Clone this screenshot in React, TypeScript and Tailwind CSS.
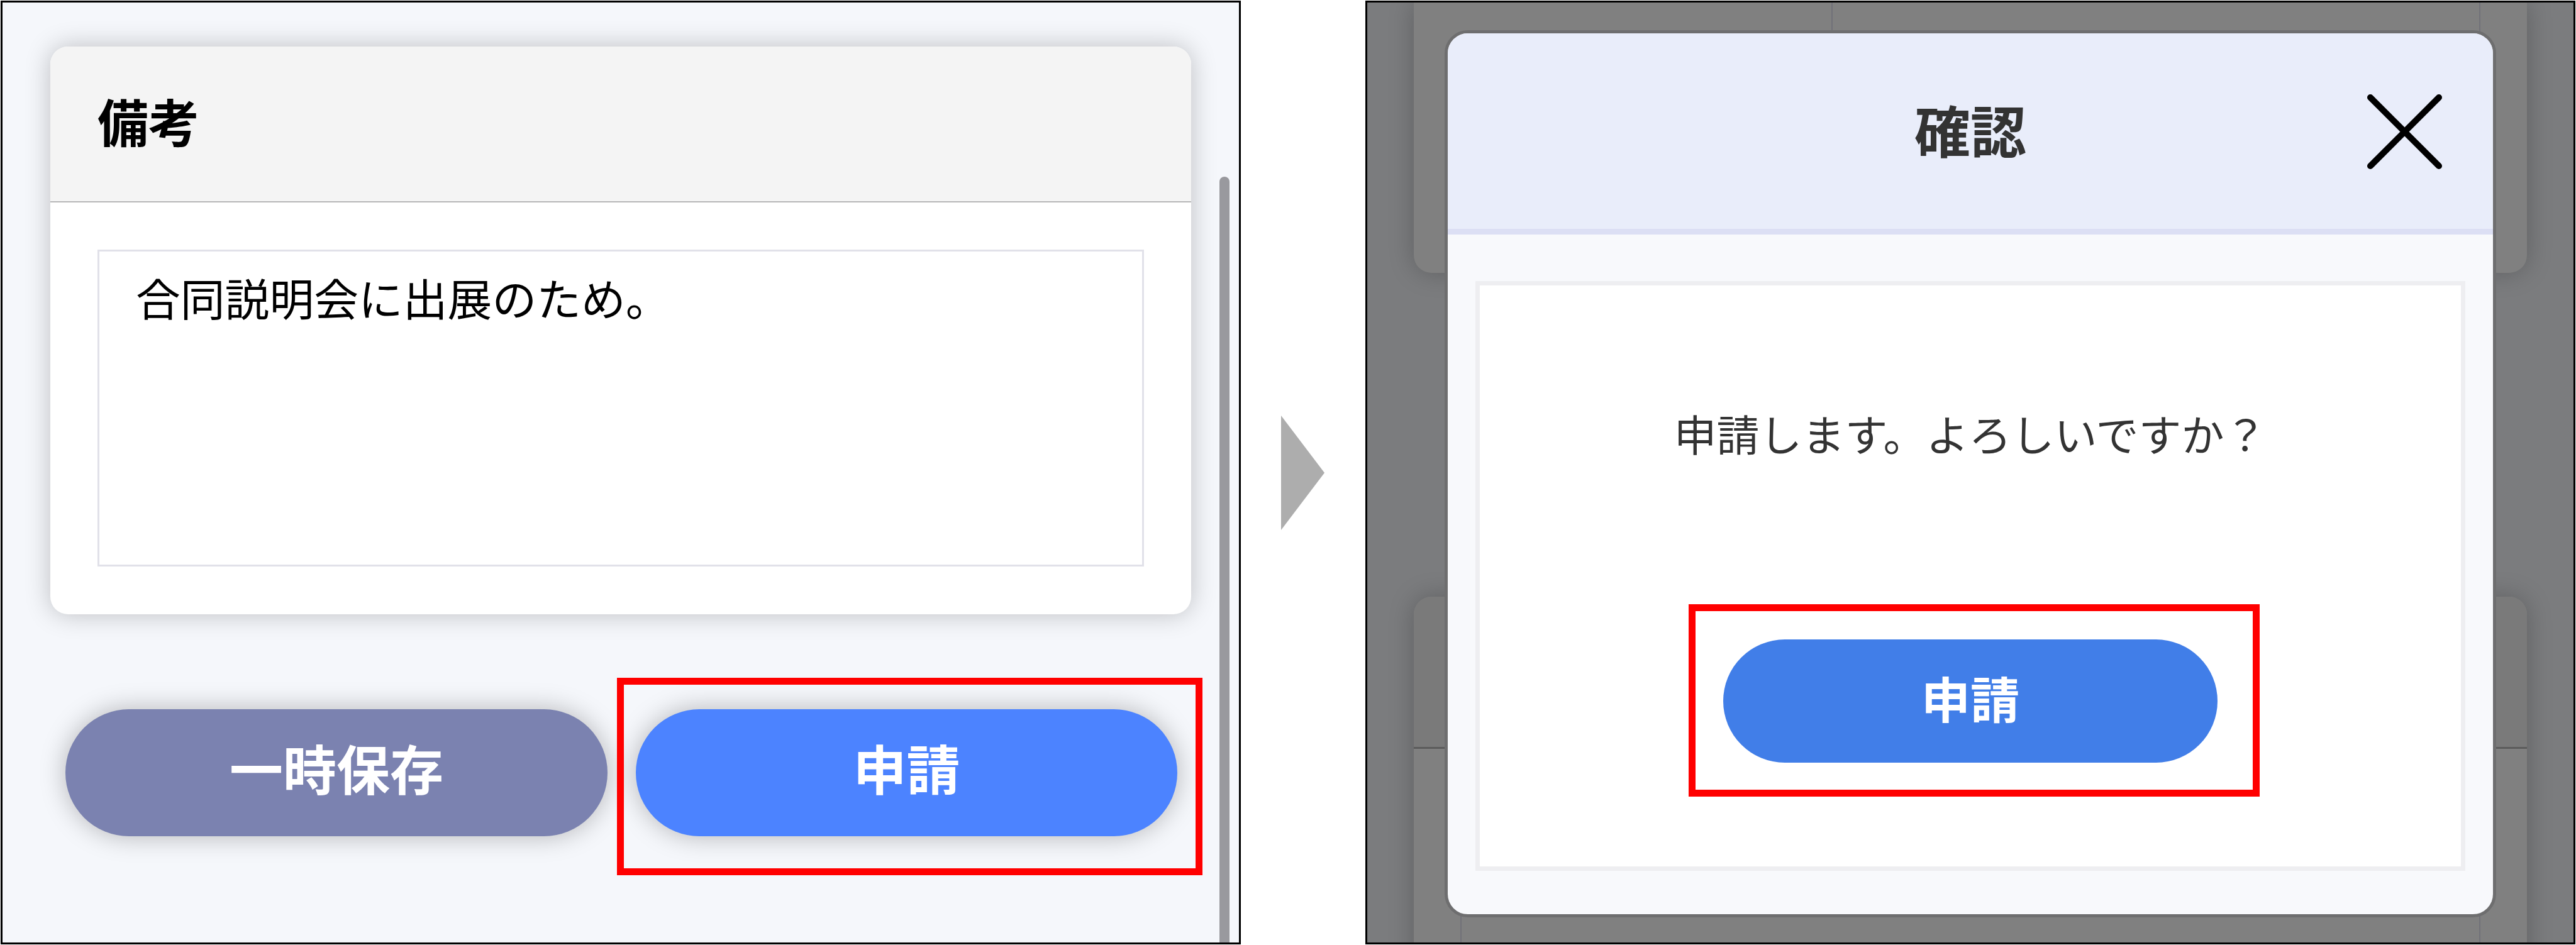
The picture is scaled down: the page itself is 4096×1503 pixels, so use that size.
function Highlight({ className }: { className: string }) {
  return <div className={`pointer-events-none absolute border-[11px] border-[#ff0000] ${className}`} />
}

function RemarksScreen() {
  return (
    <section className="relative h-[1501px] w-[1972px] shrink-0 overflow-hidden border-[3px] border-black bg-[#f5f7fb] pt-[70px]">
      {/* Remarks card */}
      <div className="ml-[76px] w-[1814px] overflow-hidden rounded-[28px] bg-white shadow-[0_0_40px_rgba(0,0,0,0.23)]">
        <h2 className="h-[248px] border-b-2 border-[#b6b6b7] bg-[#f4f4f4] pl-[75px] text-[81px] font-bold leading-[248px] text-black">
          備考
        </h2>
        <div className="px-[75px] pt-[75px] pb-[76px]">
          <div className="h-[504px] border-[3px] border-[#e1e1e9] bg-white px-[58px] pt-[29px]">
            <p className="text-[70.8px] leading-[100px] text-black">合同説明会に出展のため。</p>
          </div>
        </div>
      </div>

      {/* Actions */}
      <div className="mt-[151px] ml-[100px] flex gap-[45px]">
        <button className="h-[202px] w-[862px] rounded-full bg-[#7b82b0] pb-[3px] text-[85px] font-bold leading-none text-white shadow-[0_0_40px_rgba(0,0,0,0.27)]">
          一時保存
        </button>
        <div className="relative">
          <button className="h-[202px] w-[861px] rounded-full bg-[#4c83ff] pb-[3px] text-[85px] font-bold leading-none text-white shadow-[0_0_40px_rgba(0,0,0,0.27)]">
            申請
          </button>
          <Highlight className="-top-[50px] -left-[30px] h-[314px] w-[931px]" />
        </div>
      </div>

      {/* Scrollbar thumb */}
      <div className="absolute top-[277px] right-[15px] bottom-0 w-[16px] rounded-t-full bg-[#99999e]" />
    </section>
  )
}

function ConfirmScreen() {
  return (
    <section className="relative h-[1501px] w-[1924px] shrink-0 overflow-hidden border-[3px] border-black bg-[#7b7c7e]">
      {/* Dimmed form behind the dialog */}
      <div className="flex flex-col pl-[74px]">
        <div className="h-[430px] w-[1770px] rounded-b-[28px] bg-[#808080] pr-[74px] pl-[664px] shadow-[0_0_40px_rgba(0,0,0,0.23)]">
          <div className="h-[354px] border-x-2 border-[#717178]" />
        </div>
        <div className="mt-[515px] h-[640px] w-[1770px] overflow-hidden rounded-t-[28px] bg-[#808080] shadow-[0_0_40px_rgba(0,0,0,0.23)]">
          <div className="h-[242px] border-b-[3px] border-[#5b5b5b] bg-[#7a7a7a]" />
          <div className="px-[74px] pt-[76px]">
            <div className="h-[504px] border-2 border-[#717178]" />
          </div>
        </div>
      </div>

      {/* Confirm dialog */}
      <div className="absolute top-[44px] left-[123px] w-[1672px] overflow-hidden rounded-[37px] border-[5px] border-[#6e6e6f] bg-[#f8f9fc]">
        <header className="relative h-[320px] border-b-[9px] border-[#dcdff4] bg-[#e9edfa]">
          <h2 className="text-center text-[89px] font-bold leading-[319px] text-[#333333]">確認</h2>
          <button className="absolute top-[96px] right-[80px]" aria-label="閉じる">
            <svg className="block size-[121px]" viewBox="0 0 121 121" fill="none" stroke="#000" strokeWidth="10" strokeLinecap="round">
              <path d="M6 6 115 115M115 6 6 115" />
            </svg>
          </button>
        </header>
        <div className="px-[44px] pt-[74px] pb-[69px]">
          <div className="flex h-[938px] flex-col items-center border-[7px] border-[#eeeef1] bg-white">
            <p className="mt-[190px] text-[68px] leading-[100px] text-[#333333]">申請します。よろしいですか？</p>
            <div className="relative mt-[273px]">
              <button className="block h-[196px] w-[786px] rounded-full bg-[#417ee8] pt-[3px] text-[78.3px] font-bold leading-none text-white">
                申請
              </button>
              <Highlight className="-top-[56px] -left-[55px] h-[306px] w-[908px]" />
            </div>
          </div>
        </div>
      </div>
    </section>
  )
}

export default function App() {
  return (
    <main
      lang="ja"
      className="flex h-[1503px] w-[4096px] items-center overflow-hidden bg-white pl-px font-['Liberation_Sans','Noto_Sans_CJK_JP',sans-serif]"
    >
      <RemarksScreen />
      <svg className="ml-[64px] h-[182px] w-[69px] shrink-0" viewBox="0 0 69 182" fill="#adadad">
        <path d="M0 0 69 91 0 182Z" />
      </svg>
      <div className="ml-[65px]">
        <ConfirmScreen />
      </div>
    </main>
  )
}
